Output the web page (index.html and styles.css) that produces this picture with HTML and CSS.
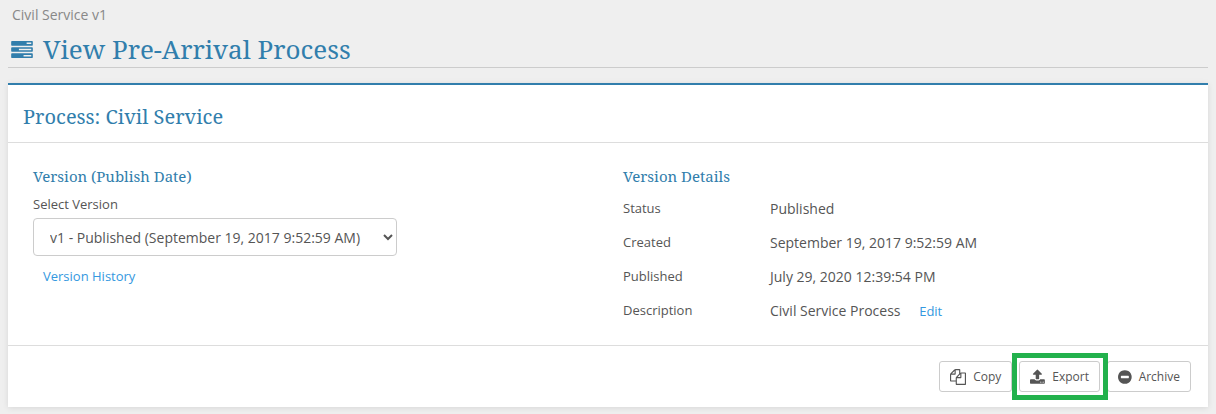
FILE: index.html
```html
<!DOCTYPE html>
<html lang="en">
<head>
  <meta charset="UTF-8">
  <title>View Pre-Arrival Process</title>
  <link rel="stylesheet" href="styles.css">
</head>
<body>
  <header class="page-header">
    <p class="process-name">Civil Service v1</p>
    <h1>
      <svg class="title-icon" viewBox="0 128 1792 1408" aria-hidden="true"><path d="M1024 1408h640v-128h-640v128zm-384-512h1024v-128h-1024v128zm640-512h384v-128h-384v128zm512 832v256q0 26-19 45t-45 19h-1664q-26 0-45-19t-19-45v-256q0-26 19-45t45-19h1664q26 0 45 19t19 45zm0-512v256q0 26-19 45t-45 19h-1664q-26 0-45-19t-19-45v-256q0-26 19-45t45-19h1664q26 0 45 19t19 45zm0-512v256q0 26-19 45t-45 19h-1664q-26 0-45-19t-19-45v-256q0-26 19-45t45-19h1664q26 0 45 19t19 45z"/></svg>
      View Pre-Arrival Process
    </h1>
  </header>

  <main class="panel">
    <h2>Process: Civil Service</h2>

    <div class="panel-body">
      <section class="column">
        <h3>Version (Publish Date)</h3>
        <label for="version">Select Version</label>
        <select id="version" class="version-select">
          <option>v1 - Published (September 19, 2017 9:52:59 AM)</option>
        </select>
        <a class="history-link" href="#history">Version History</a>
      </section>

      <section class="column">
        <h3>Version Details</h3>
        <dl class="details">
          <dt>Status</dt>
          <dd>Published</dd>
          <dt>Created</dt>
          <dd>September 19, 2017 9:52:59 AM</dd>
          <dt>Published</dt>
          <dd>July 29, 2020 12:39:54 PM</dd>
          <dt>Description</dt>
          <dd>Civil Service Process <a class="edit-link" href="#edit">Edit</a></dd>
        </dl>
      </section>
    </div>

    <footer class="panel-footer">
      <button type="button" class="btn">
        <svg class="icon" viewBox="0 0 1792 1792" aria-hidden="true"><path d="M1696 384q40 0 68 28t28 68v1216q0 40-28 68t-68 28h-960q-40 0-68-28t-28-68v-288h-544q-40 0-68-28t-28-68v-672q0-40 20-88t48-76l408-408q28-28 76-48t88-20h416q40 0 68 28t28 68v328q68-40 128-40h416zm-544 213l-299 299h299v-299zm-640-384l-299 299h299v-299zm196 647l316-316v-416h-384v416q0 40-28 68t-68 28h-416v640h512v-256q0-40 20-88t48-76zm956 804v-1152h-384v416q0 40-28 68t-68 28h-416v640h896z"/></svg>
        Copy
      </button>
      <button type="button" class="btn highlighted">
        <svg class="icon" viewBox="64 0 1664 1792" aria-hidden="true"><path d="M1344 1472q0-26-19-45t-45-19-45 19-19 45 19 45 45 19 45-19 19-45zm256 0q0-26-19-45t-45-19-45 19-19 45 19 45 45 19 45-19 19-45zm128-224v320q0 40-28 68t-68 28h-1472q-40 0-68-28t-28-68v-320q0-40 28-68t68-28h427q21 56 70.5 92t110.5 36h256q61 0 110.5-36t70.5-92h427q40 0 68 28t28 68zm-325-648q-17 40-59 40h-256v448q0 26-19 45t-45 19h-256q-26 0-45-19t-19-45v-448h-256q-42 0-59-40-17-39 14-69l448-448q18-19 45-19t45 19l448 448q31 30 14 69z"/></svg>
        Export
      </button>
      <button type="button" class="btn">
        <svg class="icon" viewBox="128 0 1536 1792" aria-hidden="true"><path d="M1344 960v-128q0-26-19-45t-45-19h-768q-26 0-45 19t-19 45v128q0 26 19 45t45 19h768q26 0 45-19t19-45zm320-64q0 209-103 385.5t-279.5 279.5-385.5 103-385.5-103-279.5-279.5-103-385.5 103-385.5 279.5-279.5 385.5-103 385.5 103 279.5 279.5 103 385.5z"/></svg>
        Archive
      </button>
    </footer>
  </main>
</body>
</html>
```
FILE: styles.css
```css
body {
  font-family: "Open Sans", "Noto Sans", sans-serif;
  font-size: 14px;
  line-height: 20px;
  background-color: #efefef;
  color: #555;
  margin: 0;
  padding: 5px 8px 7px;
}

h1, h2, h3 {
  font-family: "Noto Serif", "Droid Serif", "Liberation Serif", serif;
  font-weight: normal;
  color: #317eac;
  margin: 0;
}

a {
  color: #3498e0;
  font-size: 13px;
  text-decoration: none;
}

a:hover {
  text-decoration: underline;
}

svg {
  fill: currentColor;
}

.page-header {
  border-bottom: 1px solid #ccc;
  margin-bottom: 15px;
}

.process-name {
  margin: 0;
  padding-left: 4px;
  color: #888;
}

.page-header h1 {
  display: flex;
  align-items: center;
  gap: 10px;
  padding: 8px 3px 2px;
  font-size: 26px;
  line-height: 32px;
}

.title-icon {
  width: 22px;
  height: 17px;
}

.panel {
  background-color: #fff;
  border-top: 2px solid #317eac;
  box-shadow: 0 1px 6px rgba(0, 0, 0, 0.1);
}

.panel h2 {
  padding: 20px 15px 13px;
  border-bottom: 1px solid #ddd;
  font-size: 20px;
  line-height: 24px;
}

.panel-body {
  display: grid;
  grid-template-columns: 1fr 1fr;
  padding: 23px 10px 24px;
}

.column {
  padding: 0 15px;
}

.column h3 {
  font-size: 15px;
  line-height: 20px;
}

.column label {
  display: block;
  padding: 8px 0 4px;
  font-size: 13px;
}

.version-select {
  display: block;
  width: 65%;
  height: 38px;
  margin-bottom: 10px;
  padding: 6px 12px;
  border: 1px solid #ccc;
  border-radius: 4px;
  background-color: #fff;
  color: #555;
  font-family: inherit;
  font-size: 14px;
}

.history-link {
  margin-left: 10px;
}

.details {
  display: grid;
  grid-template-columns: 131px 1fr;
  gap: 14px 16px;
  margin: 0;
  padding-top: 13px;
}

.details dt {
  font-size: 13px;
  line-height: 18px;
}

.details dd {
  margin: 0;
}

.edit-link {
  margin-left: 15px;
}

.panel-footer {
  display: flex;
  justify-content: flex-end;
  gap: 7px;
  padding: 15px 17px;
  border-top: 1px solid #ddd;
}

.btn {
  display: flex;
  align-items: center;
  gap: 7px;
  height: 31px;
  padding: 0 10px;
  border: 1px solid #ccc;
  border-radius: 3px;
  background-color: #fff;
  color: #555;
  font-family: inherit;
  font-size: 12px;
  cursor: pointer;
}

.btn:hover {
  background-color: #eee;
}

.icon {
  height: 16px;
}

/* Green frame around the export button */
.highlighted {
  position: relative;
}

.highlighted::after {
  content: "";
  position: absolute;
  inset: -9px -9px -9px -8px;
  border: 5px solid #22b14c;
  pointer-events: none;
}
```
